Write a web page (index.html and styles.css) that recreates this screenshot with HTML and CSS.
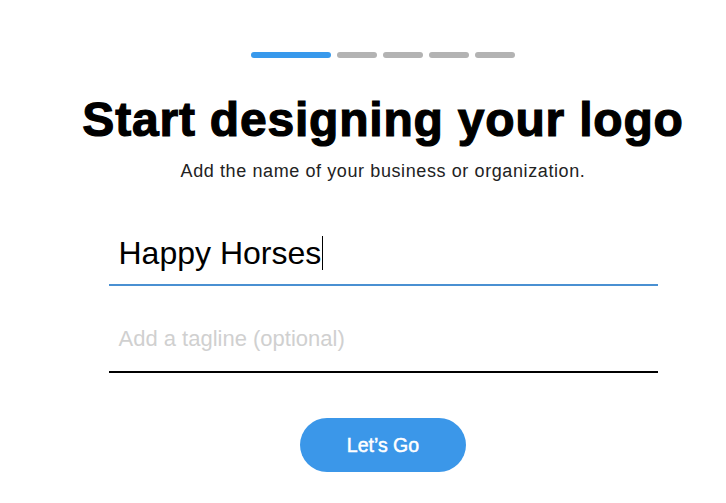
FILE: index.html
```html
<!DOCTYPE html>
<html lang="en">
<head>
    <meta charset="UTF-8">
    <meta name="viewport" content="width=device-width, initial-scale=1.0">
    <title>Start designing your logo</title>
    <link rel="stylesheet" href="styles.css">
</head>
<body>

<div class="wizard">
    <div class="steps">
        <span class="step active"></span>
        <span class="step"></span>
        <span class="step"></span>
        <span class="step"></span>
        <span class="step"></span>
    </div>

    <h1>Start designing your logo</h1>
    <p class="lead">Add the name of your business or organization.</p>

    <div class="field focused">
        <span class="value">Happy Horses</span><span class="caret"></span>
    </div>

    <div class="field">
        <span class="placeholder">Add a tagline (optional)</span>
    </div>

    <button type="button" class="go">Let’s Go</button>
</div>

</body>
</html>
```

FILE: styles.css
```css
body {
    font-family: "Liberation Sans", Arial, sans-serif;
    background-color: #ffffff;
    color: #000000;
    margin: 0;
    padding: 52px 0 0 40px;
}

.wizard {
    width: 686px;
    display: flex;
    flex-direction: column;
    align-items: center;
}

.steps {
    display: flex;
    gap: 6px;
}

.step {
    width: 40px;
    height: 6px;
    border-radius: 3px;
    background-color: #b3b3b3;
}

.step.active {
    width: 80px;
    background-color: #3899ec;
}

h1 {
    margin: 38px 0 0;
    font-size: 48px;
    line-height: 48px;
    font-weight: bold;
    letter-spacing: 0.8px;
    -webkit-text-stroke: 1.2px #000000;
    white-space: nowrap;
}

.lead {
    margin: 18px 0 0;
    font-size: 18px;
    line-height: 18px;
    letter-spacing: 0.6px;
    color: #222222;
}

.field {
    width: 549px;
    box-sizing: border-box;
    padding: 0 10px 14px;
    border-bottom: 2px solid #000000;
    display: flex;
    align-items: center;
}

.field.focused {
    margin-top: 56px;
    border-bottom-color: #4a90d2;
}

.value {
    font-size: 32px;
    line-height: 34px;
}

.caret {
    width: 1px;
    height: 34px;
    background-color: #000000;
    margin-left: 1px;
}

.field:not(.focused) {
    margin-top: 38px;
    padding-bottom: 17px;
}

.placeholder {
    font-size: 22px;
    line-height: 30px;
    color: #d0d0d0;
}

.go {
    margin-top: 45px;
    width: 166px;
    height: 54px;
    border: none;
    border-radius: 27px;
    background-color: #3b97e9;
    color: #ffffff;
    font-family: "Liberation Sans", Arial, sans-serif;
    font-size: 19.5px;
    -webkit-text-stroke: 0.5px #ffffff;
    cursor: pointer;
}
```
